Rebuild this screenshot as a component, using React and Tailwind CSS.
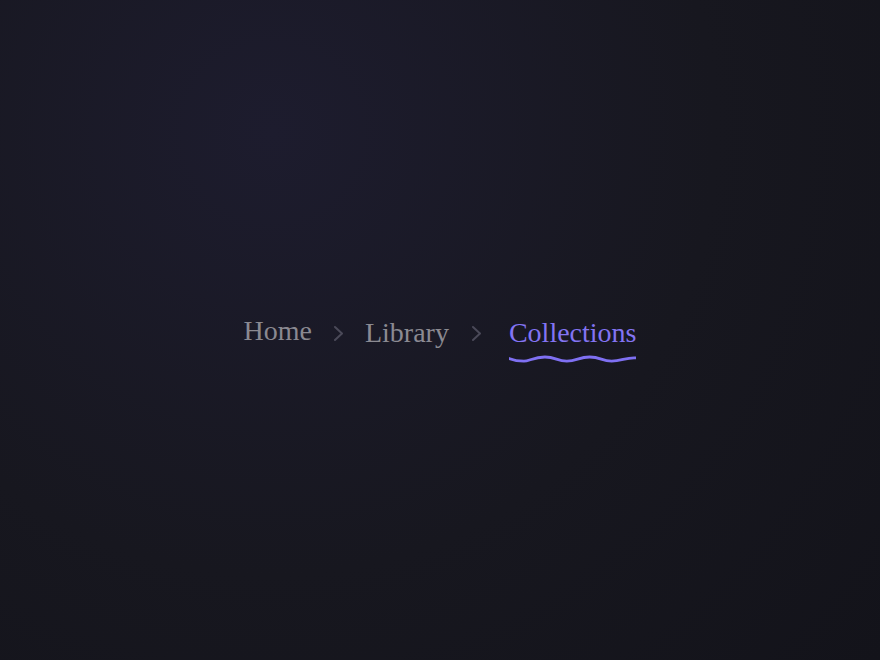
import React from 'react'

const Chevron = () => (
  <svg className="h-4 w-4 shrink-0 text-[#4a4958]" viewBox="0 0 16 16" fill="none">
    <path d="M5 2l7 6.5L5 15" stroke="currentColor" strokeWidth="2" strokeLinecap="round" strokeLinejoin="round" />
  </svg>
)

const Squiggle = () => (
  <svg className="absolute left-0 top-full mt-[8px] h-[8px] w-full" viewBox="0 0 128 8" preserveAspectRatio="none" fill="none">
    <path
      d="M0 3.5 C5 5.5 10 6.2 15 6.2 S25 2 36 2 S48 6.2 58 6.2 S70 2 81 2 S93 6.2 103 6.2 S118 2 128 3"
      stroke="#7f70f2"
      strokeWidth="2.8"
      strokeLinecap="round"
    />
  </svg>
)

export default function App() {
  return (
    <div className="flex h-[660px] w-full items-center justify-center bg-[#14141b] bg-[radial-gradient(circle_at_31%_20%,#1d1c2e_0%,#17171f_55%,#13131a_100%)] font-['Liberation_Serif','Times_New_Roman',serif]">
      {/* Breadcrumb */}
      <nav aria-label="Breadcrumb" className="mt-[5px] flex items-center text-[28px] leading-none">
        <a href="#" className="-translate-y-[2px] text-[#8a8991]">
          Home
        </a>
        <span className="ml-[18px] mr-[19px] mt-[1px]"><Chevron /></span>
        <a href="#" className="text-[#8b8a92]">
          Library
        </a>
        <span className="ml-[19px] mr-[25px] mt-[1px]"><Chevron /></span>
        <span aria-current="page" className="relative text-[#8374f3]">
          Collections
          <Squiggle />
        </span>
      </nav>
    </div>
  )
}
